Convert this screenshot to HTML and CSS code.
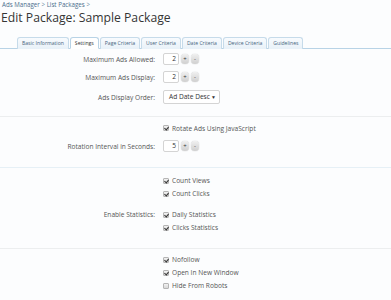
FILE: index.html
```html
<!DOCTYPE html>
<html lang="en">
<head>
    <meta charset="UTF-8">
    <title>Edit Package: Sample Package</title>
    <link rel="stylesheet" href="styles.css">
</head>
<body>
    <div class="crumbs"><a href="#">Ads Manager</a> &gt; <a href="#">List Packages</a> &gt;</div>
    <h1>Edit Package: Sample Package</h1>

    <ul class="tabs">
        <li>Basic Information</li>
        <li class="active">Settings</li>
        <li>Page Criteria</li>
        <li>User Criteria</li>
        <li>Date Criteria</li>
        <li>Device Criteria</li>
        <li>Guidelines</li>
    </ul>

    <form class="form">
        <div class="group g1">
            <div class="row">
                <label class="lbl">Maximum Ads Allowed:</label>
                <div class="ctrl">
                    <span class="num">2</span><span class="spin">+</span><span class="spin">-</span>
                </div>
            </div>
            <div class="row">
                <label class="lbl">Maximum Ads Display:</label>
                <div class="ctrl">
                    <span class="num">2</span><span class="spin">+</span><span class="spin">-</span>
                </div>
            </div>
            <div class="row tall">
                <label class="lbl">Ads Display Order:</label>
                <div class="ctrl">
                    <span class="select">Ad Date Desc <b>&#9660;</b></span>
                </div>
            </div>
        </div>

        <div class="group g2">
            <div class="row">
                <span class="lbl"></span>
                <div class="ctrl">
                    <label class="chk"><span class="box on"></span>Rotate Ads Using JavaScript</label>
                </div>
            </div>
            <div class="row">
                <label class="lbl">Rotation Interval in Seconds:</label>
                <div class="ctrl">
                    <span class="num">5</span><span class="spin">+</span><span class="spin">-</span>
                </div>
            </div>
        </div>

        <div class="group g3">
            <div class="row list">
                <span class="lbl"></span>
                <div class="checks">
                    <label class="chk"><span class="box on"></span>Count Views</label>
                    <label class="chk"><span class="box on"></span>Count Clicks</label>
                </div>
            </div>
            <div class="row list">
                <label class="lbl">Enable Statistics:</label>
                <div class="checks">
                    <label class="chk"><span class="box on"></span>Daily Statistics</label>
                    <label class="chk"><span class="box on"></span>Clicks Statistics</label>
                </div>
            </div>
        </div>

        <div class="group g4">
            <div class="row list">
                <span class="lbl"></span>
                <div class="checks">
                    <label class="chk"><span class="box on"></span>Nofollow</label>
                    <label class="chk"><span class="box on"></span>Open In New Window</label>
                    <label class="chk"><span class="box"></span>Hide From Robots</label>
                </div>
            </div>
        </div>
    </form>
</body>
</html>
```

FILE: styles.css
```css
* {
    margin: 0;
    padding: 0;
    box-sizing: border-box;
}

body {
    background-color: #fcfdfe;
    font-family: "Open Sans", "Noto Sans", sans-serif;
    color: #444;
    overflow: hidden;
}

.crumbs {
    padding: 1px 0 0 2px;
    font-size: 6.2px;
    line-height: 8px;
    color: #6d8aa3;
}

.crumbs a {
    color: #4a6d8c;
    text-decoration: none;
}

h1 {
    padding-left: 1px;
    font-size: 12.2px;
    font-weight: normal;
    line-height: 18px;
    color: #353535;
}

/* tabs */
.tabs {
    display: flex;
    list-style: none;
    margin-top: 10px;
    padding-left: 17px;
    border-bottom: 1px solid #b8d3e6;
}

.tabs li {
    height: 12px;
    padding: 0 4px;
    margin-right: 1px;
    margin-bottom: -1px;
    border: 1px solid #c6dbea;
    border-bottom: none;
    border-radius: 3px 3px 0 0;
    background: linear-gradient(#f8fbfe, #e8f1f8);
    font-size: 5.1px;
    line-height: 11px;
    color: #476580;
}

.tabs li.active {
    background: #fff;
    border-color: #b8d3e6;
    border-bottom: 1px solid #fff;
    color: #333;
}

/* form */
.form {
    font-size: 6.6px;
}

.group {
    border-bottom: 1px solid #eceeef;
}

.g1 {
    padding: 1px 0 8px;
}

.g2 {
    padding: 2px 0 12px;
    border-bottom-color: #e6f0f6;
}

.g3 {
    padding: 6px 0 14px;
}

.g3 .row + .row {
    margin-top: 8px;
}

.g4 {
    padding: 4px 0 10px;
    border-bottom: none;
}

.row {
    display: grid;
    grid-template-columns: 155px 1fr;
    column-gap: 8px;
    height: 18px;
    align-items: center;
}

.row.tall {
    height: 22px;
}

.row.list {
    height: auto;
    align-items: start;
}

.lbl {
    text-align: right;
    color: #555;
    line-height: 13px;
}

.ctrl {
    display: flex;
    align-items: center;
    gap: 2px;
}

.num {
    width: 16px;
    height: 12px;
    padding-right: 2px;
    border: 1px solid #d4d4d4;
    border-radius: 2px;
    background: #fff;
    text-align: right;
    line-height: 10px;
    color: #333;
}

.spin {
    width: 8px;
    height: 10px;
    border-radius: 4px;
    background: linear-gradient(#f0f0f0, #cfcfcf);
    box-shadow: 0 0 1px #aaa;
    text-align: center;
    font-size: 6px;
    line-height: 10px;
    color: #333;
}

.select {
    display: flex;
    justify-content: space-between;
    width: 57px;
    height: 14px;
    padding: 0 3px 0 5px;
    border: 1px solid #d4d4d4;
    border-radius: 2px;
    background: #fff;
    line-height: 12px;
    color: #333;
}

.select b {
    font-size: 5px;
    font-weight: normal;
}

.checks {
    display: flex;
    flex-direction: column;
}

.chk {
    display: flex;
    align-items: center;
    gap: 3px;
    height: 13px;
    color: #555;
}

.box {
    position: relative;
    width: 6px;
    height: 6px;
    border: 1px solid #b5b5b5;
    border-radius: 1px;
    background: linear-gradient(#f2f2f2, #d8d8d8);
}

.box.on::after {
    content: "";
    position: absolute;
    left: 1px;
    top: 0;
    width: 2px;
    height: 3px;
    border: solid #333;
    border-width: 0 1px 1px 0;
    transform: rotate(40deg);
}
```
